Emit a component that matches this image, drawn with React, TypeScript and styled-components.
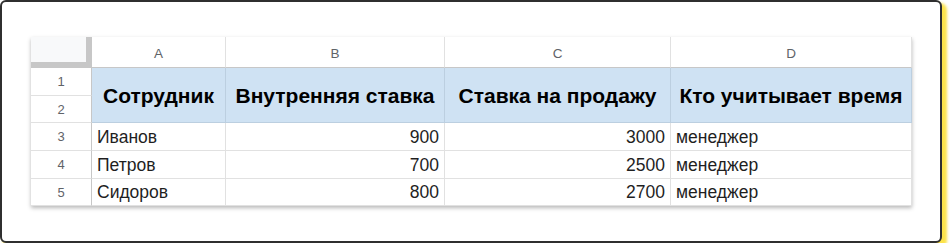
import styled, { createGlobalStyle } from "styled-components";

const GlobalStyle = createGlobalStyle`
  html, body {
    margin: 0;
    padding: 0;
    background: #fff;
  }
  body {
    font-family: "Liberation Sans", Arial, sans-serif;
  }
`;

const columns = ["A", "B", "C", "D"];
const headers = ["Сотрудник", "Внутренняя ставка", "Ставка на продажу", "Кто учитывает время"];

const rows = [
  { name: "Иванов", inner: 900, sale: 3000, who: "менеджер" },
  { name: "Петров", inner: 700, sale: 2500, who: "менеджер" },
  { name: "Сидоров", inner: 800, sale: 2700, who: "менеджер" },
];

const App = () => {
  return (
    <>
      <GlobalStyle />
      <Card>
        <Sheet>
          <Corner />
          {columns.map((c) => (
            <ColLetter key={c}>{c}</ColLetter>
          ))}
          <RowNum $row={2}>1</RowNum>
          <RowNum $row={3}>2</RowNum>
          {/* merged header cells span sheet rows 1 and 2 */}
          {headers.map((h, i) => (
            <HeadCell key={h} $col={i + 2}>
              {h}
            </HeadCell>
          ))}
          {rows.map((r, i) => (
            <Row key={r.name}>
              <RowNum $row={i + 4}>{i + 3}</RowNum>
              <Cell>{r.name}</Cell>
              <Cell $num>{r.inner}</Cell>
              <Cell $num>{r.sale}</Cell>
              <Cell>{r.who}</Cell>
            </Row>
          ))}
        </Sheet>
      </Card>
    </>
  );
};

export default App;

const Card = styled.div`
  box-sizing: border-box;
  width: 942px;
  height: 243px;
  padding: 35px 0 0 29px;
  border: 2px solid #2f2f2f;
  border-radius: 6px;
  background: #fff;
  box-shadow: 4px 4px 3px 1px #fce34a;
`;

const Sheet = styled.div`
  display: grid;
  grid-template-columns: 61px 134px 219px 226px 241px;
  grid-template-rows: 31px 28px 27px 28px 28px 27px;
  width: 881px;
  box-shadow: 0 2px 4px rgba(0, 0, 0, 0.28);
  background: #fff;
`;

const Row = styled.div`
  display: contents;
`;

const Corner = styled.div`
  background: #f8f9fa;
  border-right: 6px solid #c7c7c7;
  border-bottom: 6px solid #c7c7c7;
`;

const ColLetter = styled.div`
  display: flex;
  align-items: center;
  justify-content: center;
  padding-top: 2px;
  border-right: 1px solid #e1e1e1;
  border-bottom: 1px solid #c7c7c7;
  color: #5f6368;
  font-size: 13.5px;
`;

const RowNum = styled.div<{ $row: number }>`
  grid-column: 1;
  grid-row: ${(p) => p.$row};
  display: flex;
  align-items: center;
  justify-content: center;
  border-right: 1px solid #c7c7c7;
  border-bottom: 1px solid #e1e1e1;
  color: #5f6368;
  font-size: 13px;
`;

const HeadCell = styled.div<{ $col: number }>`
  grid-column: ${(p) => p.$col};
  grid-row: 2 / span 2;
  display: flex;
  align-items: center;
  justify-content: center;
  padding-top: 1px;
  background: #cfe2f3;
  border-right: 1px solid #bccfe0;
  border-bottom: 1px solid #bccfe0;
  color: #000;
  font-size: 21px;
  font-weight: 700;
  white-space: nowrap;
`;

const Cell = styled.div<{ $num?: boolean }>`
  display: flex;
  align-items: center;
  justify-content: ${(p) => (p.$num ? "flex-end" : "flex-start")};
  padding: 1px 5px 0;
  border-right: 1px solid #e1e1e1;
  border-bottom: 1px solid #e1e1e1;
  color: #1f1f1f;
  font-size: 17.5px;
`;
